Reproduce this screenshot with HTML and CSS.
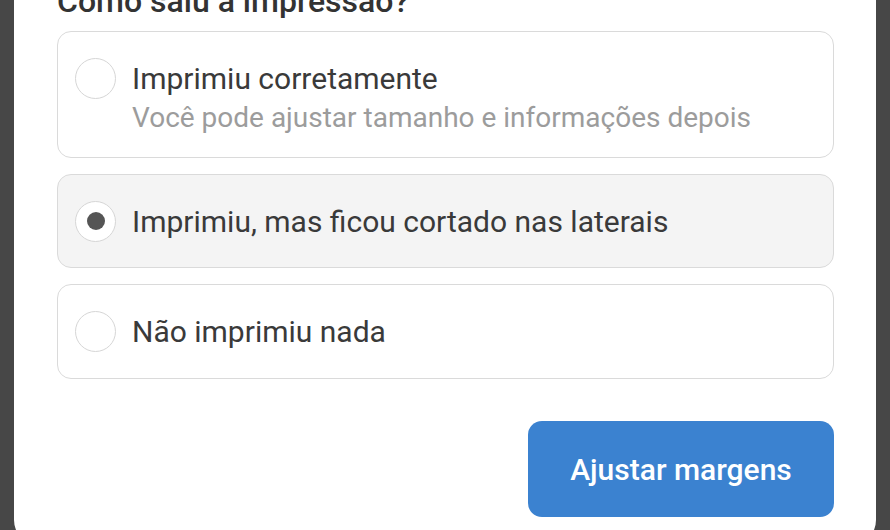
FILE: index.html
```html
<!DOCTYPE html>
<html lang="pt-BR">
<head>
<meta charset="utf-8">
<link rel="stylesheet" href="styles.css">
</head>
<body>
<div class="dialog">
  <h2 class="title">Como saiu a impressão?</h2>
  <div class="options">
    <div class="option first">
      <span class="radio"></span>
      <div class="label">
        <div class="main">Imprimiu corretamente</div>
        <div class="sub">Você pode ajustar tamanho e informações depois</div>
      </div>
    </div>
    <div class="option selected">
      <span class="radio"><span class="dot"></span></span>
      <div class="label">
        <div class="main">Imprimiu, mas ficou cortado nas laterais</div>
      </div>
    </div>
    <div class="option">
      <span class="radio"></span>
      <div class="label">
        <div class="main">Não imprimiu nada</div>
      </div>
    </div>
  </div>
  <div class="actions">
    <button class="primary">Ajustar margens</button>
  </div>
</div>
</body>
</html>
```
FILE: styles.css
```css
html, body {
  margin: 0;
  padding: 0;
  height: 100%;
  overflow: hidden;
}
body {
  background: #474747;
  font-family: Roboto, "Noto Sans", sans-serif;
}
.dialog {
  display: flow-root;
  margin-left: 14px;
  width: 862px;
  height: 546px;
  background: #ffffff;
  border-radius: 0 0 26px 26px;
  box-sizing: border-box;
  padding: 0 42px 0 43px;
}
.title {
  margin: -19px 0 0 0;
  font-size: 32px;
  line-height: 40px;
  font-weight: 500;
  color: #333333;
  white-space: nowrap;
}
.options {
  margin-top: 10px;
  display: flex;
  flex-direction: column;
  gap: 16px;
}
.option {
  display: flex;
  align-items: center;
  gap: 16px;
  border: 1px solid #dadada;
  border-radius: 14px;
  padding: 26px 17px 26px 17px;
  background: #ffffff;
}
.option.first {
  align-items: flex-start;
  padding-top: 27px;
  padding-bottom: 20px;
}
.option.first .radio {
  margin-top: -1px;
}
.option.selected {
  background: #f4f4f4;
  padding-top: 25.5px;
  padding-bottom: 25.5px;
}
.radio {
  flex: none;
  width: 41px;
  height: 41px;
  box-sizing: border-box;
  border: 1.5px solid #d6d6d6;
  border-radius: 50%;
  background: #ffffff;
  display: flex;
  align-items: center;
  justify-content: center;
}
.dot {
  width: 18px;
  height: 18px;
  border-radius: 50%;
  background: #555555;
}
.main {
  font-size: 30px;
  line-height: 39px;
  color: #3a3a3a;
}
.sub {
  font-size: 28px;
  line-height: 39px;
  color: #9c9c9c;
}
.actions {
  margin-top: 42px;
  display: flex;
  justify-content: flex-end;
}
.primary {
  width: 306px;
  height: 96px;
  border: none;
  border-radius: 14px;
  background: #3b82d0;
  color: #ffffff;
  font-family: Roboto, "Noto Sans", sans-serif;
  font-size: 30px;
  font-weight: 500;
}
```
